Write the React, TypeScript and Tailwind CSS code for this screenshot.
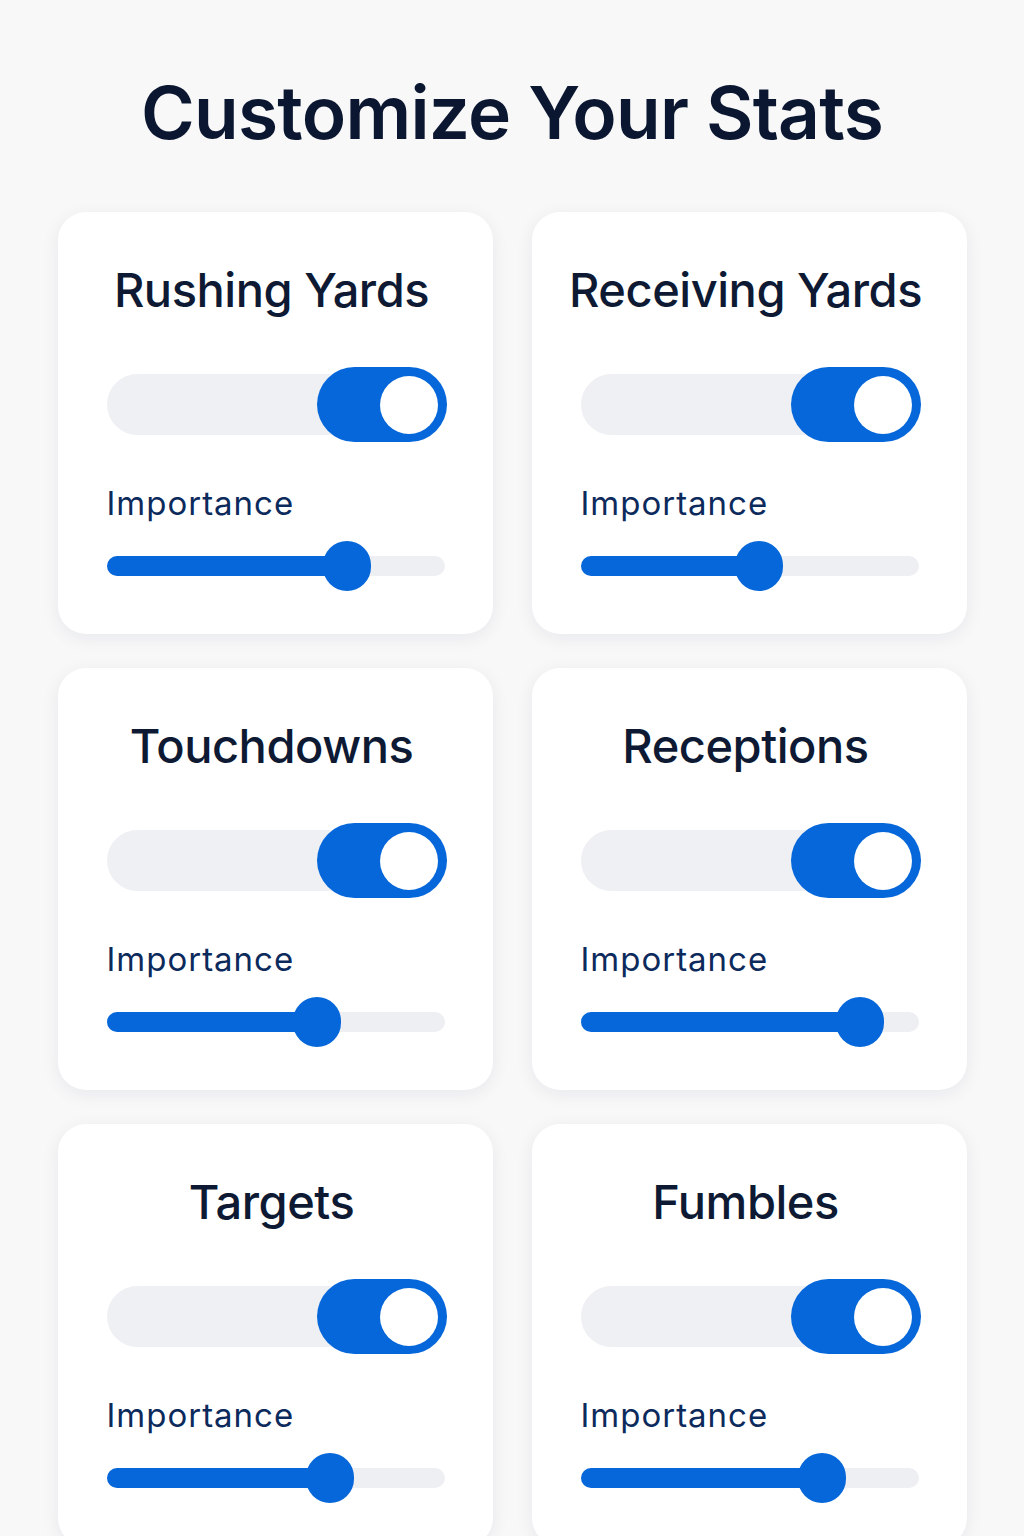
import React from "react";

interface StatItem {
  name: string;
  value: number; // 0..1 position of the importance slider
}

const stats: StatItem[] = [
  { name: "Rushing Yards", value: 0.713 },
  { name: "Receiving Yards", value: 0.528 },
  { name: "Touchdowns", value: 0.624 },
  { name: "Receptions", value: 0.828 },
  { name: "Targets", value: 0.66 },
  { name: "Fumbles", value: 0.715 },
];

function Toggle() {
  return (
    <div className="relative h-[75px] w-full flex items-center">
      <div className="h-[61px] w-full rounded-full bg-[#eff0f4]" />
      <div className="absolute right-0 top-0 h-[75px] w-[130px] rounded-full bg-[#0667da] flex items-center justify-end pr-[9px]">
        <div className="h-[58px] w-[58px] rounded-full bg-white" />
      </div>
    </div>
  );
}

function ImportanceSlider({ value }: { value: number }) {
  return (
    <div className="relative h-[50px] w-full flex items-center">
      <div className="h-[20px] w-full rounded-full bg-[#eeeff3]" />
      <div
        className="absolute left-0 h-[20px] rounded-full bg-[#0667da]"
        style={{ width: `${value * 100}%` }}
      />
      <div
        className="absolute h-[50px] w-[48px] -translate-x-1/2 rounded-full bg-[#0667da]"
        style={{ left: `${value * 100}%` }}
      />
    </div>
  );
}

function StatCard({ stat }: { stat: StatItem }) {
  return (
    <div className="bg-white rounded-[28px] shadow-[0_4px_18px_rgba(15,23,42,0.07)] pl-[49px] pr-[46px] pt-[49px] pb-[43px] flex flex-col">
      <div className="h-[56px] flex items-center justify-center pr-[10px]">
        <h2 className="text-[47px] leading-none font-medium text-[#0e1a33] tracking-[-0.01em] whitespace-nowrap">
          {stat.name}
        </h2>
      </div>
      <div className="mt-[50px]">
        <Toggle />
      </div>
      <div className="mt-[43px] h-[36px] flex items-center">
        <span className="text-[33px] leading-none text-[#0d2a5c] tracking-[0.03em]">
          Importance
        </span>
      </div>
      <div className="mt-[20px] pr-[2px]">
        <ImportanceSlider value={stat.value} />
      </div>
    </div>
  );
}

export default function App() {
  return (
    <div
      className="min-h-[1536px] w-full bg-[#f8f8f9] flex flex-col items-center"
      style={{ fontFamily: "Inter, 'Noto Sans', sans-serif" }}
    >
      <h1 className="mt-[70px] h-[84px] flex items-center text-[73px] leading-none font-semibold text-[#0b1730] tracking-[-0.01em]">
        Customize Your Stats
      </h1>
      <div className="mt-[58px] grid grid-cols-2 gap-x-[39px] gap-y-[34px] w-[909px]">
        {stats.map((s) => (
          <StatCard key={s.name} stat={s} />
        ))}
      </div>
    </div>
  );
}
